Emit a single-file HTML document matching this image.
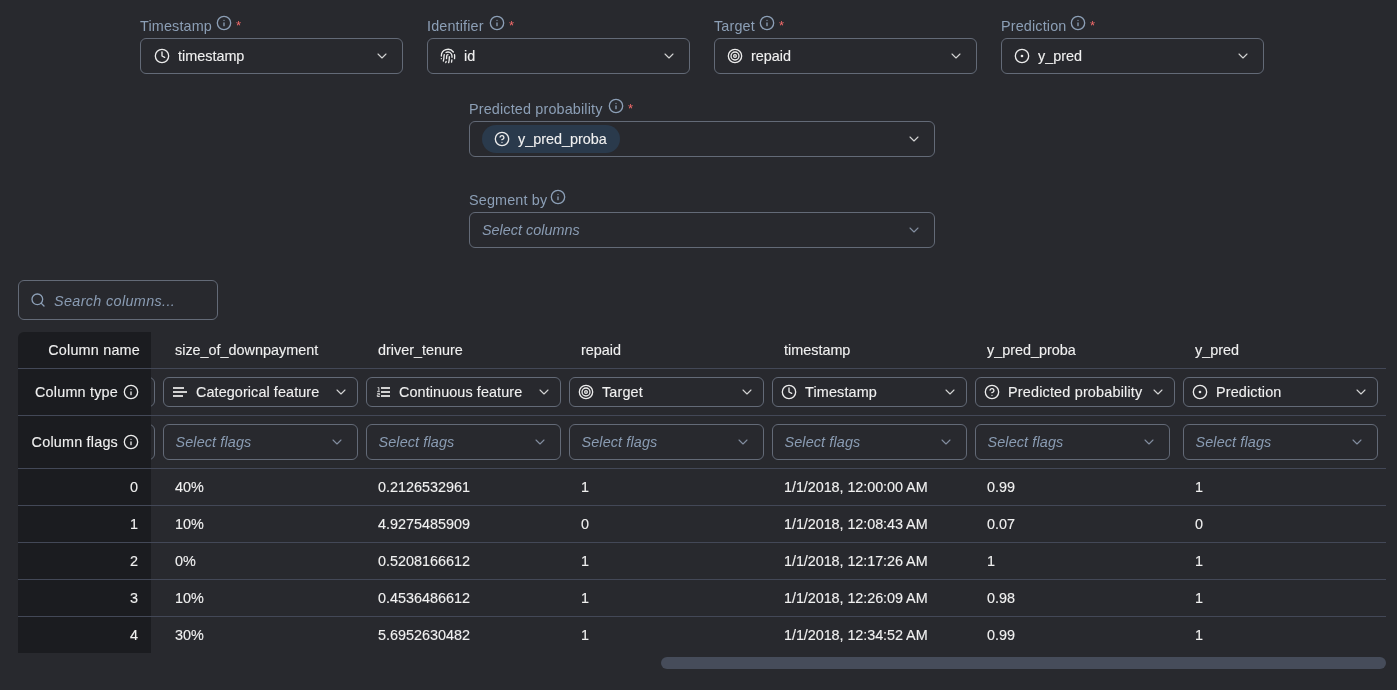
<!DOCTYPE html>
<html><head><meta charset="utf-8">
<style>
html,body{margin:0;padding:0;}
body{will-change:transform;width:1397px;height:690px;overflow:hidden;background:#28292e;font-family:"Liberation Sans",sans-serif;font-size:14px;color:#e6e6e6;position:relative;}
.a{position:absolute;}
.lbl{position:absolute;height:20px;line-height:20px;color:#8c9fb6;font-size:14.4px;letter-spacing:0.15px;white-space:nowrap;}
.lbl svg{position:absolute;}
.req{position:absolute;color:#f26a6a;font-size:13px;margin-top:2px;}
.box{position:absolute;box-sizing:border-box;border:1px solid #636a77;border-radius:6px;background:transparent;display:flex;align-items:center;white-space:nowrap;}
.ic{position:absolute;width:16px;height:16px;fill:none;stroke:#ececec;stroke-width:2;stroke-linecap:round;stroke-linejoin:round;}
.val{position:absolute;color:#f0f0f0;-webkit-text-stroke:0.12px #f0f0f0;font-size:14.4px;line-height:20px;}
.ph{position:absolute;color:#8a9cb3;font-style:italic;font-size:14.4px;line-height:20px;}
.chev{position:absolute;width:16px;height:16px;fill:none;stroke:#d4d4d4;stroke-width:1.6;stroke-linecap:round;stroke-linejoin:round;}
.hd,.cell,.sl{position:absolute;line-height:20px;white-space:nowrap;color:#f0f0f0;-webkit-text-stroke:0.12px #f0f0f0;font-size:14.4px;}
</style></head><body>


<!-- top row labels -->
<div class="lbl" style="left:140px;top:16px;">Timestamp</div>
<svg class="ic" style="left:216px;top:15px;stroke:#8c9fb6;width:16px;height:16px" viewBox="0 0 24 24"><circle cx="12" cy="12" r="10"/><path d="M12 16v-4"/><path d="M12 8h.01"/></svg>
<div class="req" style="left:236px;top:16px;">*</div>

<div class="lbl" style="left:427px;top:16px;">Identifier</div>
<svg class="ic" style="left:489px;top:15px;stroke:#8c9fb6;width:16px;height:16px" viewBox="0 0 24 24"><circle cx="12" cy="12" r="10"/><path d="M12 16v-4"/><path d="M12 8h.01"/></svg>
<div class="req" style="left:509px;top:16px;">*</div>

<div class="lbl" style="left:714px;top:16px;">Target</div>
<svg class="ic" style="left:759px;top:15px;stroke:#8c9fb6;width:16px;height:16px" viewBox="0 0 24 24"><circle cx="12" cy="12" r="10"/><path d="M12 16v-4"/><path d="M12 8h.01"/></svg>
<div class="req" style="left:779px;top:16px;">*</div>

<div class="lbl" style="left:1001px;top:16px;">Prediction</div>
<svg class="ic" style="left:1070px;top:15px;stroke:#8c9fb6;width:16px;height:16px" viewBox="0 0 24 24"><circle cx="12" cy="12" r="10"/><path d="M12 16v-4"/><path d="M12 8h.01"/></svg>
<div class="req" style="left:1090px;top:16px;">*</div>

<!-- top row selects -->
<div class="box" style="left:140px;top:38px;width:263px;height:36px;">
  <svg class="ic" style="left:13px;top:9px" viewBox="0 0 24 24"><circle cx="12" cy="12" r="10"/><path d="M12 6v6l4 2"/></svg>
  <span class="val" style="left:37px;top:7px">timestamp</span>
  <svg class="chev" style="left:233px;top:9px" viewBox="0 0 24 24"><path d="m6 9 6 6 6-6"/></svg>
</div>
<div class="box" style="left:427px;top:38px;width:263px;height:36px;">
  <svg class="ic" style="left:12px;top:9px" viewBox="0 0 24 24"><path d="M12 10a2 2 0 0 0-2 2c0 1.02-.1 2.51-.26 4"/><path d="M14 13.12c0 2.38 0 6.38-1 8.88"/><path d="M17.29 21.02c.12-.6.43-2.3.5-3.02"/><path d="M2 12a10 10 0 0 1 18-6"/><path d="M2 16h.01"/><path d="M21.8 16c.2-2 .131-5.354 0-6"/><path d="M5 19.5C5.5 18 6 15 6 12a6 6 0 0 1 .34-2"/><path d="M8.65 22c.21-.66.45-1.32.57-2"/><path d="M9 6.8a6 6 0 0 1 9 5.2v2"/></svg>
  <span class="val" style="left:36px;top:7px">id</span>
  <svg class="chev" style="left:233px;top:9px" viewBox="0 0 24 24"><path d="m6 9 6 6 6-6"/></svg>
</div>
<div class="box" style="left:714px;top:38px;width:263px;height:36px;">
  <svg class="ic" style="left:12px;top:9px" viewBox="0 0 24 24"><circle cx="12" cy="12" r="10"/><circle cx="12" cy="12" r="6"/><circle cx="12" cy="12" r="2"/></svg>
  <span class="val" style="left:36px;top:7px">repaid</span>
  <svg class="chev" style="left:233px;top:9px" viewBox="0 0 24 24"><path d="m6 9 6 6 6-6"/></svg>
</div>
<div class="box" style="left:1001px;top:38px;width:263px;height:36px;">
  <svg class="ic" style="left:12px;top:9px" viewBox="0 0 24 24"><circle cx="12" cy="12" r="10"/><circle cx="12" cy="12" r="1"/></svg>
  <span class="val" style="left:36px;top:7px">y_pred</span>
  <svg class="chev" style="left:233px;top:9px" viewBox="0 0 24 24"><path d="m6 9 6 6 6-6"/></svg>
</div>

<!-- predicted probability -->
<div class="lbl" style="left:469px;top:99px;">Predicted probability</div>
<svg class="ic" style="left:608px;top:98px;stroke:#8c9fb6;width:16px;height:16px" viewBox="0 0 24 24"><circle cx="12" cy="12" r="10"/><path d="M12 16v-4"/><path d="M12 8h.01"/></svg>
<div class="req" style="left:628px;top:99px;">*</div>
<div class="box" style="left:469px;top:121px;width:466px;height:36px;">
  <div class="a" style="left:12px;top:3px;width:138px;height:28px;border-radius:14px;background:#2a3a4c;"></div>
  <svg class="ic" style="left:24px;top:9px" viewBox="0 0 24 24"><circle cx="12" cy="12" r="10"/><path d="M9.09 9a3 3 0 0 1 5.83 1c0 2-3 3-3 3"/><path d="M12 17h.01"/></svg>
  <span class="val" style="left:48px;top:7px">y_pred_proba</span>
  <svg class="chev" style="left:436px;top:9px" viewBox="0 0 24 24"><path d="m6 9 6 6 6-6"/></svg>
</div>

<!-- segment by -->
<div class="lbl" style="left:469px;top:190px;">Segment by</div>
<svg class="ic" style="left:550px;top:189px;stroke:#8c9fb6;width:16px;height:16px" viewBox="0 0 24 24"><circle cx="12" cy="12" r="10"/><path d="M12 16v-4"/><path d="M12 8h.01"/></svg>
<div class="box" style="left:469px;top:212px;width:466px;height:36px;">
  <span class="ph" style="left:12px;top:7px">Select columns</span>
  <svg class="chev" style="left:436px;top:9px;stroke:#838ea0" viewBox="0 0 24 24"><path d="m6 9 6 6 6-6"/></svg>
</div>

<!-- search -->
<div class="box" style="left:18px;top:280px;width:200px;height:40px;background:transparent;">
  <svg class="ic" style="left:11px;top:11px;stroke:#8c9fb6;width:16px;height:16px" viewBox="0 0 24 24"><circle cx="11" cy="11" r="8"/><path d="m21 21-4.3-4.3"/></svg>
  <span class="ph" style="left:35px;top:9.5px;letter-spacing:0.35px">Search columns...</span>
</div>

<!-- TABLE -->
<div class="a" style="left:18px;top:332px;width:1368px;height:321px;overflow:hidden;">
<div class="box" style="left:-58px;top:45px;width:195px;height:30px;"></div>
<div class="box" style="left:-58px;top:92px;width:195px;height:36px;"></div>
<div class="hd" style="left:157px;top:8px">size_of_downpayment</div>
<div class="box" style="left:145px;top:45px;width:195px;height:30px;"><svg class="ic" style="left:9px;top:6px" viewBox="0 0 16 16"><g fill="#d2d2d2" stroke="none"><rect x="0" y="3" width="11" height="2"/><rect x="0" y="7" width="14" height="2"/><rect x="0" y="11" width="10" height="2"/></g></svg><span class="val" style="left:32px;top:4px;letter-spacing:0.09px">Categorical feature</span><svg class="chev" style="left:169px;top:6px" viewBox="0 0 24 24"><path d="m6 9 6 6 6-6"/></svg></div>
<div class="box" style="left:145px;top:92px;width:195px;height:36px;"><span class="ph" style="left:11.5px;top:7px;letter-spacing:0.12px">Select flags</span><svg class="chev" style="left:165px;top:9px;stroke:#838ea0" viewBox="0 0 24 24"><path d="m6 9 6 6 6-6"/></svg></div>
<div class="cell" style="left:157px;top:145px;letter-spacing:0">40%</div>
<div class="cell" style="left:157px;top:182px;letter-spacing:0">10%</div>
<div class="cell" style="left:157px;top:219px;letter-spacing:0">0%</div>
<div class="cell" style="left:157px;top:256px;letter-spacing:0">10%</div>
<div class="cell" style="left:157px;top:293px;letter-spacing:0">30%</div>
<div class="hd" style="left:360px;top:8px">driver_tenure</div>
<div class="box" style="left:348px;top:45px;width:195px;height:30px;"><svg class="ic" style="left:9px;top:6px" viewBox="0 0 16 16"><g fill="#d2d2d2" stroke="none"><rect x="5" y="3" width="9" height="2"/><rect x="5" y="7" width="9" height="2"/><rect x="5" y="11" width="9" height="2"/></g><path d="M1.6 3.6h1.3v3.3M1.2 7.4h2.6M1.2 9.4h2.4v1.5h-2.3v1.6h2.5" stroke="#d2d2d2" stroke-width="1" stroke-linecap="butt" stroke-linejoin="miter" fill="none"/></svg><span class="val" style="left:32px;top:4px;letter-spacing:0.09px">Continuous feature</span><svg class="chev" style="left:169px;top:6px" viewBox="0 0 24 24"><path d="m6 9 6 6 6-6"/></svg></div>
<div class="box" style="left:348px;top:92px;width:195px;height:36px;"><span class="ph" style="left:11.5px;top:7px;letter-spacing:0.12px">Select flags</span><svg class="chev" style="left:165px;top:9px;stroke:#838ea0" viewBox="0 0 24 24"><path d="m6 9 6 6 6-6"/></svg></div>
<div class="cell" style="left:360px;top:145px;letter-spacing:0">0.2126532961</div>
<div class="cell" style="left:360px;top:182px;letter-spacing:0">4.9275485909</div>
<div class="cell" style="left:360px;top:219px;letter-spacing:0">0.5208166612</div>
<div class="cell" style="left:360px;top:256px;letter-spacing:0">0.4536486612</div>
<div class="cell" style="left:360px;top:293px;letter-spacing:0">5.6952630482</div>
<div class="hd" style="left:563px;top:8px">repaid</div>
<div class="box" style="left:551px;top:45px;width:195px;height:30px;"><svg class="ic" style="left:8px;top:6px" viewBox="0 0 24 24"><circle cx="12" cy="12" r="10"/><circle cx="12" cy="12" r="6"/><circle cx="12" cy="12" r="2"/></svg><span class="val" style="left:32px;top:4px;letter-spacing:0.15px">Target</span><svg class="chev" style="left:169px;top:6px" viewBox="0 0 24 24"><path d="m6 9 6 6 6-6"/></svg></div>
<div class="box" style="left:551px;top:92px;width:195px;height:36px;"><span class="ph" style="left:11.5px;top:7px;letter-spacing:0.12px">Select flags</span><svg class="chev" style="left:165px;top:9px;stroke:#838ea0" viewBox="0 0 24 24"><path d="m6 9 6 6 6-6"/></svg></div>
<div class="cell" style="left:563px;top:145px;letter-spacing:0">1</div>
<div class="cell" style="left:563px;top:182px;letter-spacing:0">0</div>
<div class="cell" style="left:563px;top:219px;letter-spacing:0">1</div>
<div class="cell" style="left:563px;top:256px;letter-spacing:0">1</div>
<div class="cell" style="left:563px;top:293px;letter-spacing:0">1</div>
<div class="hd" style="left:766px;top:8px">timestamp</div>
<div class="box" style="left:754px;top:45px;width:195px;height:30px;"><svg class="ic" style="left:8px;top:6px" viewBox="0 0 24 24"><circle cx="12" cy="12" r="10"/><path d="M12 6v6l4 2"/></svg><span class="val" style="left:32px;top:4px;letter-spacing:0.15px">Timestamp</span><svg class="chev" style="left:169px;top:6px" viewBox="0 0 24 24"><path d="m6 9 6 6 6-6"/></svg></div>
<div class="box" style="left:754px;top:92px;width:195px;height:36px;"><span class="ph" style="left:11.5px;top:7px;letter-spacing:0.12px">Select flags</span><svg class="chev" style="left:165px;top:9px;stroke:#838ea0" viewBox="0 0 24 24"><path d="m6 9 6 6 6-6"/></svg></div>
<div class="cell" style="left:766px;top:145px;letter-spacing:-0.06px">1/1/2018, 12:00:00 AM</div>
<div class="cell" style="left:766px;top:182px;letter-spacing:-0.06px">1/1/2018, 12:08:43 AM</div>
<div class="cell" style="left:766px;top:219px;letter-spacing:-0.06px">1/1/2018, 12:17:26 AM</div>
<div class="cell" style="left:766px;top:256px;letter-spacing:-0.06px">1/1/2018, 12:26:09 AM</div>
<div class="cell" style="left:766px;top:293px;letter-spacing:-0.06px">1/1/2018, 12:34:52 AM</div>
<div class="hd" style="left:969px;top:8px">y_pred_proba</div>
<div class="box" style="left:957px;top:45px;width:200px;height:30px;"><svg class="ic" style="left:8px;top:6px" viewBox="0 0 24 24"><circle cx="12" cy="12" r="10"/><path d="M9.09 9a3 3 0 0 1 5.83 1c0 2-3 3-3 3"/><path d="M12 17h.01"/></svg><span class="val" style="left:32px;top:4px;letter-spacing:0.19px">Predicted probability</span><svg class="chev" style="left:174px;top:6px" viewBox="0 0 24 24"><path d="m6 9 6 6 6-6"/></svg></div>
<div class="box" style="left:957px;top:92px;width:195px;height:36px;"><span class="ph" style="left:11.5px;top:7px;letter-spacing:0.12px">Select flags</span><svg class="chev" style="left:165px;top:9px;stroke:#838ea0" viewBox="0 0 24 24"><path d="m6 9 6 6 6-6"/></svg></div>
<div class="cell" style="left:969px;top:145px;letter-spacing:0">0.99</div>
<div class="cell" style="left:969px;top:182px;letter-spacing:0">0.07</div>
<div class="cell" style="left:969px;top:219px;letter-spacing:0">1</div>
<div class="cell" style="left:969px;top:256px;letter-spacing:0">0.98</div>
<div class="cell" style="left:969px;top:293px;letter-spacing:0">0.99</div>
<div class="hd" style="left:1177px;top:8px">y_pred</div>
<div class="box" style="left:1165px;top:45px;width:195px;height:30px;"><svg class="ic" style="left:8px;top:6px" viewBox="0 0 24 24"><circle cx="12" cy="12" r="10"/><circle cx="12" cy="12" r="1"/></svg><span class="val" style="left:32px;top:4px;letter-spacing:0.15px">Prediction</span><svg class="chev" style="left:169px;top:6px" viewBox="0 0 24 24"><path d="m6 9 6 6 6-6"/></svg></div>
<div class="box" style="left:1165px;top:92px;width:195px;height:36px;"><span class="ph" style="left:11.5px;top:7px;letter-spacing:0.12px">Select flags</span><svg class="chev" style="left:165px;top:9px;stroke:#838ea0" viewBox="0 0 24 24"><path d="m6 9 6 6 6-6"/></svg></div>
<div class="cell" style="left:1177px;top:145px;letter-spacing:0">1</div>
<div class="cell" style="left:1177px;top:182px;letter-spacing:0">0</div>
<div class="cell" style="left:1177px;top:219px;letter-spacing:0">1</div>
<div class="cell" style="left:1177px;top:256px;letter-spacing:0">1</div>
<div class="cell" style="left:1177px;top:293px;letter-spacing:0">1</div>
<div class="a" style="left:0;top:36px;width:1368px;height:1px;background:#434857;"></div>
<div class="a" style="left:0;top:83px;width:1368px;height:1px;background:#434857;"></div>
<div class="a" style="left:0;top:136px;width:1368px;height:1px;background:#434857;"></div>
<div class="a" style="left:0;top:173px;width:1368px;height:1px;background:#434857;"></div>
<div class="a" style="left:0;top:210px;width:1368px;height:1px;background:#434857;"></div>
<div class="a" style="left:0;top:247px;width:1368px;height:1px;background:#434857;"></div>
<div class="a" style="left:0;top:284px;width:1368px;height:1px;background:#434857;"></div>
<div class="a" style="left:0;top:0;width:133px;height:321px;background:#1b1c20;border-top-left-radius:6px;"></div>
<div class="a" style="left:0;top:36px;width:133px;height:1px;background:#434857;"></div>
<div class="a" style="left:0;top:83px;width:133px;height:1px;background:#434857;"></div>
<div class="a" style="left:0;top:136px;width:133px;height:1px;background:#434857;"></div>
<div class="a" style="left:0;top:173px;width:133px;height:1px;background:#434857;"></div>
<div class="a" style="left:0;top:210px;width:133px;height:1px;background:#434857;"></div>
<div class="a" style="left:0;top:247px;width:133px;height:1px;background:#434857;"></div>
<div class="a" style="left:0;top:284px;width:133px;height:1px;background:#434857;"></div>
<div class="sl" style="right:1246px;top:8px;letter-spacing:0.2px">Column name</div>
<div class="sl" style="right:1268px;top:50px;letter-spacing:0.2px">Column type</div>
<svg class="ic" style="left:105px;top:52px;width:16px;height:16px" viewBox="0 0 24 24"><circle cx="12" cy="12" r="10"/><path d="M12 16v-4"/><path d="M12 8h.01"/></svg>
<div class="sl" style="right:1268px;top:100px;letter-spacing:0.2px">Column flags</div>
<svg class="ic" style="left:105px;top:102px;width:16px;height:16px" viewBox="0 0 24 24"><circle cx="12" cy="12" r="10"/><path d="M12 16v-4"/><path d="M12 8h.01"/></svg>
<div class="sl" style="right:1248px;top:145px">0</div>
<div class="sl" style="right:1248px;top:182px">1</div>
<div class="sl" style="right:1248px;top:219px">2</div>
<div class="sl" style="right:1248px;top:256px">3</div>
<div class="sl" style="right:1248px;top:293px">4</div>
</div>
<div class="a" style="left:661px;top:657px;width:725px;height:12px;border-radius:6px;background:#464c5a;"></div>
</body></html>
